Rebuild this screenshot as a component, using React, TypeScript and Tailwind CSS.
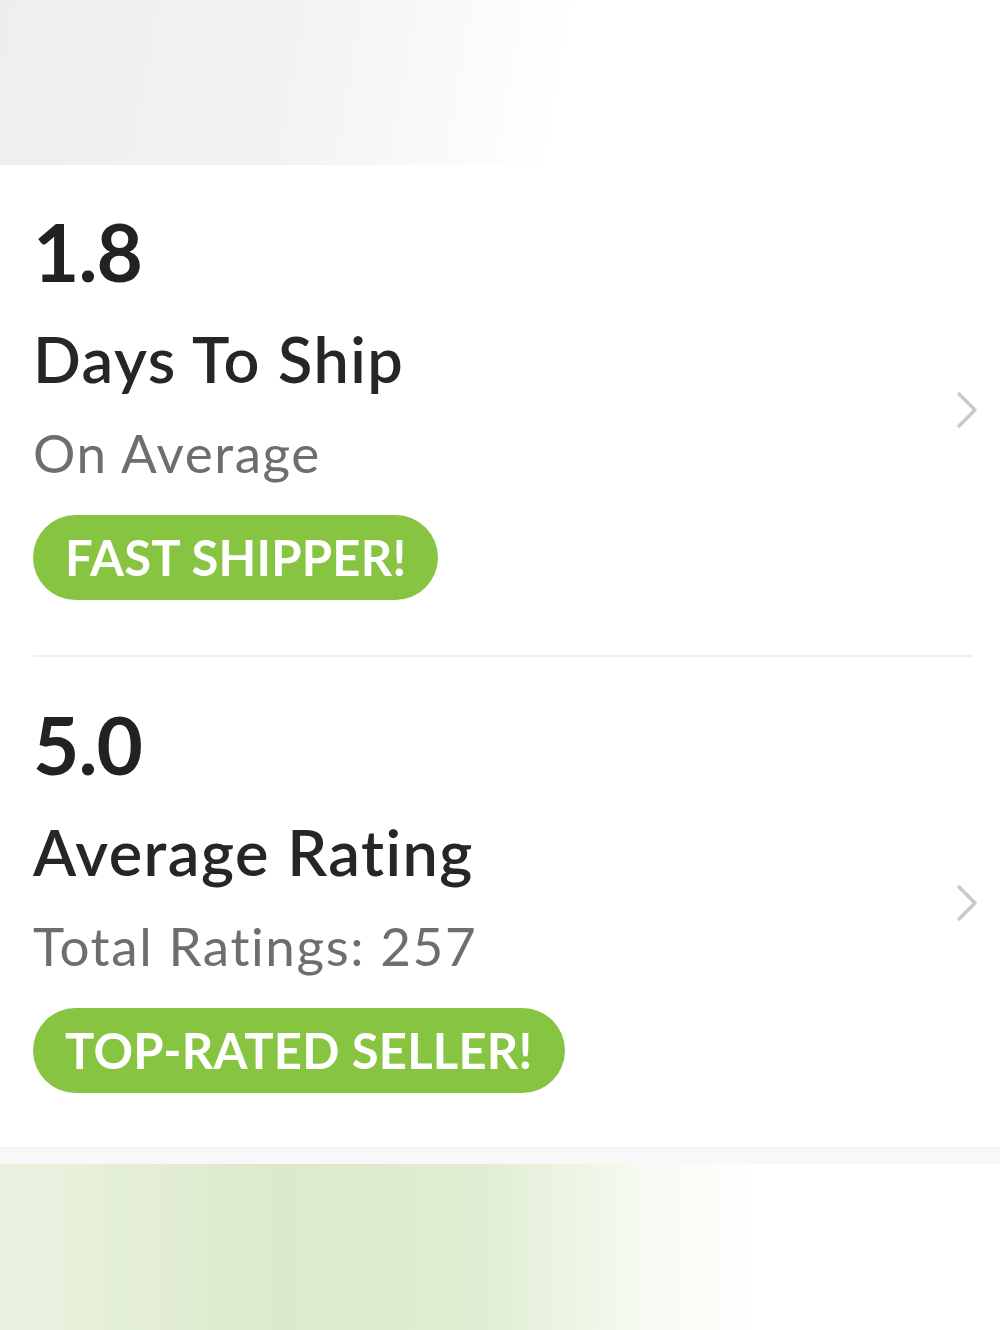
import React from 'react';

interface StatProps {
  value: string;
  title: string;
  subtitle: string;
  badge: string;
}

function Chevron() {
  return (
    <svg width="22" height="38" viewBox="0 0 22 38" fill="none" className="mt-[8px] shrink-0">
      <path d="M3 3 L19 19 L3 35" stroke="#c9c9c9" strokeWidth="3.5" strokeLinecap="round" strokeLinejoin="round" />
    </svg>
  );
}

function StatRow({ value, title, subtitle, badge }: StatProps) {
  return (
    <div className="flex items-center justify-between pl-[33px] pr-[22px]">
      <div className="flex flex-col items-start">
        <div className="text-[80px] leading-[80px] font-bold text-[#222222] tracking-[-1px]">{value}</div>
        <div className="mt-[36px] text-[63px] leading-[63px] font-semibold text-[#262626] tracking-[1.5px]">{title}</div>
        <div className="mt-[36px] text-[53px] leading-[53px] text-[#6e6e6e] tracking-[1.6px]">{subtitle}</div>
        <div className="mt-[36px] flex h-[85px] items-center rounded-full bg-[#86c441] px-[32px] text-[49px] font-bold leading-none tracking-[0.2px] text-white">
          {badge}
        </div>
      </div>
      <Chevron />
    </div>
  );
}

export default function App() {
  return (
    <div className="flex h-[1330px] w-[1000px] flex-col overflow-hidden bg-white font-['Lato','Liberation_Sans',sans-serif]">
      {/* Top faded band */}
      <div className="h-[165px] shrink-0 bg-[linear-gradient(100deg,#eeeeee_0%,#f3f3f3_30%,#fbfbfb_48%,#ffffff_56%)]"></div>

      {/* Stats card */}
      <div className="pt-[46px] pb-[55px]">
        <StatRow value="1.8" title="Days To Ship" subtitle="On Average" badge="FAST SHIPPER!" />
      </div>
      <div className="ml-[33px] mr-[27px] h-[2px] bg-[#f1efec]"></div>
      <div className="pt-[47px] pb-[54px]">
        <StatRow value="5.0" title="Average Rating" subtitle="Total Ratings: 257" badge="TOP-RATED SELLER!" />
      </div>

      <div className="h-[17px] shrink-0 border-t border-[#f3f3f3] bg-[#f8f8f8]"></div>
      <div className="flex-1 bg-[linear-gradient(90deg,#eaf3e1_0%,#dce9ca_28%,#e0edd2_48%,#f6faf1_64%,#ffffff_76%)]"></div>
    </div>
  );
}
